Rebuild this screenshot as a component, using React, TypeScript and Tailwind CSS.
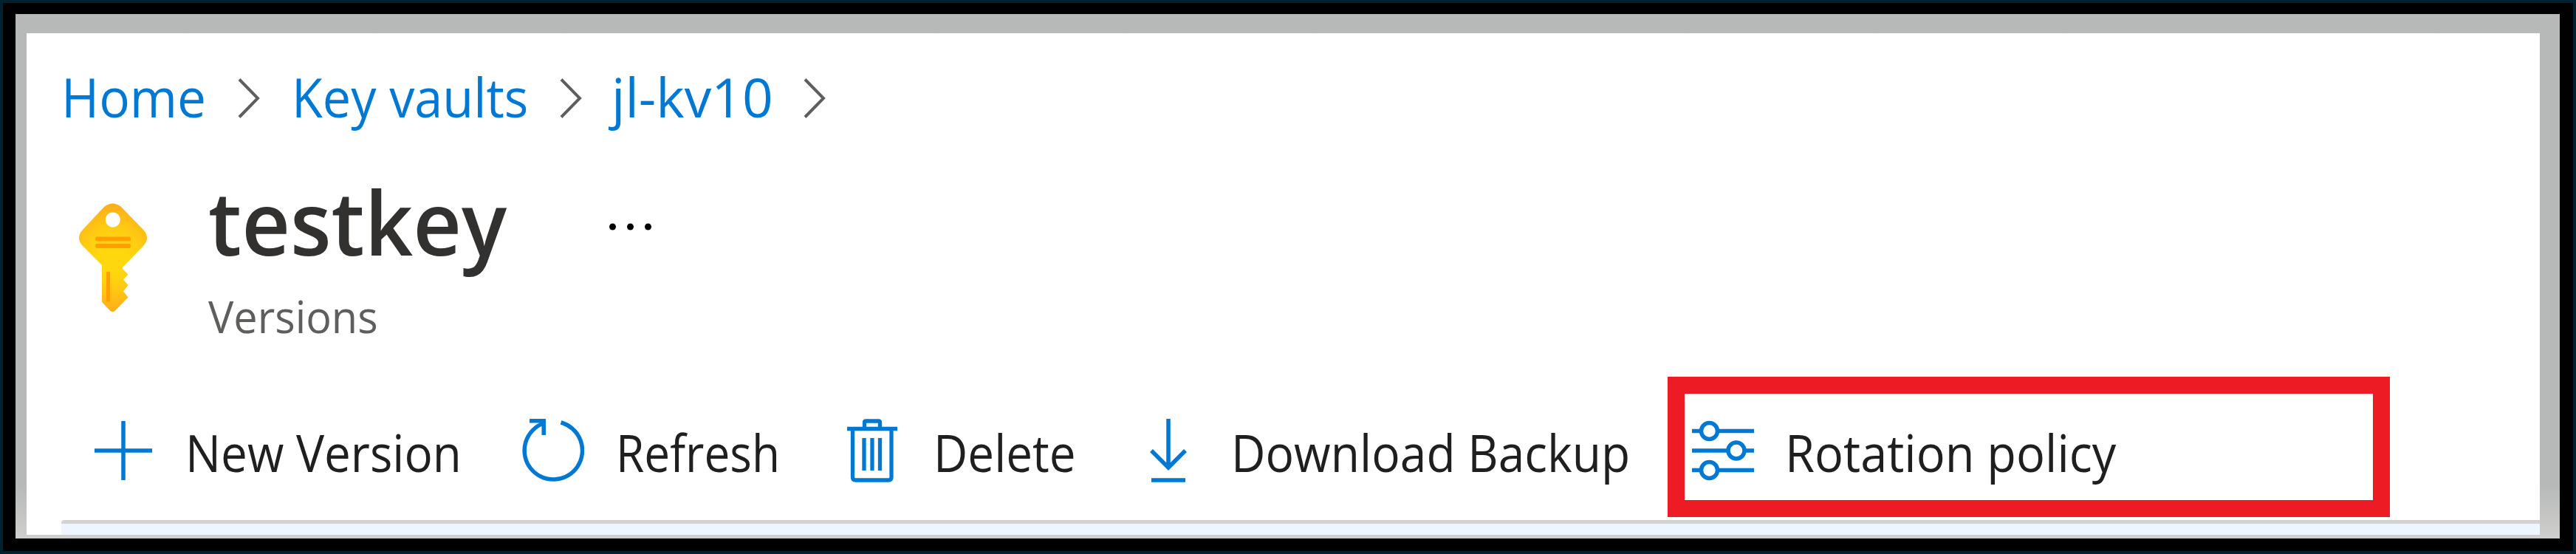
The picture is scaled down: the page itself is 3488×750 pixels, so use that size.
import React from "react";

const BLUE = "#0078d4";

function Chevron({ className }: { className: string }) {
  return (
    <svg className={className} width="30" height="54" viewBox="0 0 30 54" fill="none" stroke="#605e5c" strokeWidth="4">
      <path d="M2 1.5 L27 27 L2 52.5" />
    </svg>
  );
}

function KeyIcon() {
  return (
    <svg className="ml-[70px] mt-[53px] shrink-0" width="94" height="148" viewBox="0 0 94 148">
      <defs>
        <radialGradient id="head" gradientUnits="userSpaceOnUse" cx="46" cy="74" r="82">
          <stop offset="0.25" stopColor="#ffd70f" />
          <stop offset="0.5" stopColor="#ffcb12" />
          <stop offset="0.9" stopColor="#feac19" />
          <stop offset="1" stopColor="#feab1a" />
        </radialGradient>
      </defs>
      <path
        fill="url(#head)"
        fillRule="evenodd"
        d="M35 5 Q46.500 -4 58 5 L88 36 Q98 47 88 58 L60 87 L60 89 L67.500 96.500 L61 103.500 L67.500 111 L61 119.500 L67.500 127.500 L50 145.500 Q46.500 149 43 145.500 L32 134 V84 L6 58 Q-4 47 6 36 Z M46.800 12.500 a10 10 0 1 0 0.010 0 Z"
      />
      <rect x="23" y="45.500" width="48" height="6" rx="2.500" fill="#ff9f00" />
      <rect x="23" y="55" width="48" height="6" rx="2.500" fill="#ff9f00" />
      <rect x="38" y="92.500" width="5" height="41" rx="2" fill="#ff9f00" />
    </svg>
  );
}

function PlusIcon() {
  return (
    <svg className="shrink-0" width="78" height="86" viewBox="0 0 78 86" stroke={BLUE} strokeWidth="5.500">
      <path d="M39 3 V83 M0 43 H78" />
    </svg>
  );
}

function RefreshIcon() {
  return (
    <svg className="shrink-0" width="84" height="86" viewBox="0 0 84 86" fill="none" stroke={BLUE} strokeWidth="5.500">
      <path d="M52.500 5 A39.200 39.200 0 1 1 29 6" />
      <path d="M10 2.800 H29.200 V22" />
    </svg>
  );
}

function TrashIcon() {
  return (
    <svg className="shrink-0" width="68" height="86" viewBox="0 0 68 86" fill="none" stroke={BLUE} strokeWidth="5.300">
      <path d="M0 13.500 H68 M23.500 13 V5 Q23.500 3 25.500 3 H42.500 Q44.500 3 44.500 5 V13" />
      <path d="M7.500 13 V79 Q7.500 83 11.500 83 H56 Q60 83 60 79 V13 M23 26 V70 M34 26 V70 M44.500 26 V70" />
    </svg>
  );
}

function DownloadIcon() {
  return (
    <svg className="shrink-0" width="50" height="86" viewBox="0 0 50 86" fill="none" stroke={BLUE} strokeWidth="5.500">
      <path d="M25 0 V66 M2 43 L25 66 L48 43 M2 83 H48" />
    </svg>
  );
}

function SlidersIcon() {
  return (
    <svg className="shrink-0" width="84" height="82" viewBox="0 0 84 82" fill="none" stroke={BLUE} strokeWidth="5.500">
      <path d="M0 14.500 H12 M35 14.500 H84 M0 41 H48 M71 41 H84 M0 67.500 H12 M35 67.500 H84" />
      <circle cx="23.500" cy="14.500" r="11" />
      <circle cx="60" cy="41" r="11" />
      <circle cx="23.500" cy="67.500" r="11" />
    </svg>
  );
}

export default function App() {
  return (
    <div className="h-[750px] w-[3488px] overflow-hidden border-4 border-[#002230] bg-black pl-[17px] pt-[15px] font-['Open_Sans',sans-serif]">
      <div className="h-[710px] w-[3445px] bg-linear-to-b from-[#b7b9b8] from-90% to-[#cfd0cd] pl-[15px] pt-[26px]">
        <main className="flex h-[679px] w-[3403px] flex-col bg-white">
          <nav className="flex h-[177px] items-start whitespace-nowrap pl-[47px] pt-[36px] text-[73px] leading-[100px] text-[#0078d4]">
            <a className="w-[239px] shrink-0 origin-left scale-x-[0.95]">Home</a>
            <Chevron className="mr-[43px] mt-[25px] shrink-0" />
            <a className="w-[363px] shrink-0 origin-left scale-x-[0.936]">Key vaults</a>
            <Chevron className="mr-[40px] mt-[25px] shrink-0" />
            <a className="w-[260px] shrink-0 origin-left">jl-kv10</a>
            <Chevron className="mt-[25px] shrink-0" />
          </nav>
          <header className="flex h-[288px] items-start">
            <KeyIcon />
            <div className="w-[625px] shrink-0 whitespace-nowrap pl-[82px]">
              <h1 className="-mt-[2px] h-[168px] origin-left scale-x-[0.952] text-[120px] font-semibold leading-[160px] text-[#323130]">testkey</h1>
              <p className="origin-left scale-x-[0.96] text-[60px] leading-[80px] text-[#605e5c]">Versions</p>
            </div>
            <svg className="mt-[80px]" width="60" height="10" viewBox="0 0 60 10">
              <circle cx="4.500" cy="5" r="4.500" />
              <circle cx="28.500" cy="5" r="4.500" />
              <circle cx="52.500" cy="5" r="4.500" />
            </svg>
          </header>
          <div className="flex h-[194px] items-start whitespace-nowrap pl-[92px] text-[69px] leading-[96px] text-[#1f1f1f]">
            <div className="flex h-[190px] w-[579px] shrink-0 items-center gap-[45px] pt-[10px]">
              <PlusIcon />
              <span className="origin-left scale-x-[0.925] pt-[3px]">New Version</span>
            </div>
            <div className="flex h-[190px] w-[440px] shrink-0 items-center gap-[43px] pt-[10px]">
              <RefreshIcon />
              <span className="origin-left scale-x-[0.9] pt-[3px]">Refresh</span>
            </div>
            <div className="flex h-[190px] w-[410px] shrink-0 items-center gap-[49px] pt-[10px]">
              <TrashIcon />
              <span className="origin-left scale-x-[0.925] pt-[3px]">Delete</span>
            </div>
            <div className="flex h-[190px] w-[701px] shrink-0 items-center gap-[60px] pt-[10px]">
              <DownloadIcon />
              <span className="origin-left scale-x-[0.929] pt-[3px]">Download Backup</span>
            </div>
            <div className="flex h-[190px] w-[978px] shrink-0 items-center gap-[42px] border-[23px] border-[#ed1c24] pl-[10px] pt-[10px]">
              <SlidersIcon />
              <span className="origin-left scale-x-[0.94] pt-[3px]">Rotation policy</span>
            </div>
          </div>
          <div className="ml-[47px] h-[20px] rounded-tl-[4px] border-t-[5px] border-[#d2d2d1] bg-[#edf5ff]" />
        </main>
      </div>
    </div>
  );
}
